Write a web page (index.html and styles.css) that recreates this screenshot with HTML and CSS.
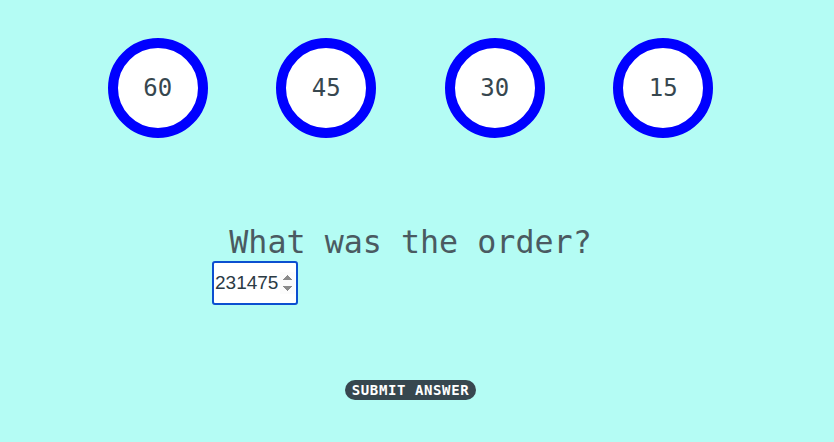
FILE: index.html
```html
<!DOCTYPE html>
<html>
<head>
<meta charset="utf-8">
<link rel="stylesheet" href="styles.css">
</head>
<body>
<main class="page">
  <div class="circles">
    <div class="circle">60</div>
    <div class="circle">45</div>
    <div class="circle">30</div>
    <div class="circle">15</div>
  </div>
  <section class="question">
    <h2 class="prompt">What was the order?</h2>
    <div class="answer">
      <input class="order-input" type="number" value="231475" autofocus>
    </div>
  </section>
  <div class="actions">
    <button class="submit">SUBMIT ANSWER</button>
  </div>
</main>
</body>
</html>
```
FILE: styles.css
```css
html, body {
  margin: 0;
  padding: 0;
  background: #b4fcf4;
}
.page {
  width: 821px;
  font-family: "DejaVu Sans Mono", monospace;
  color: #37474f;
}
.circles {
  display: flex;
  justify-content: center;
  gap: 68.5px;
  padding-top: 38px;
}
.circle {
  width: 100px;
  height: 100px;
  box-sizing: border-box;
  border: 10px solid #0000ff;
  border-radius: 50%;
  background: #ffffff;
  display: flex;
  align-items: center;
  justify-content: center;
  font-size: 24px;
  font-family: "DejaVu Sans Mono", monospace;
  color: #37474f;
}
.question {
  width: 397px;
  margin: 84px auto 0;
}
.prompt {
  margin: 0;
  font-weight: normal;
  font-size: 31.7px;
  line-height: 40px;
  text-align: center;
  color: #4a5a61;
}
.answer {
  margin-top: -1px;
}
.order-input {
  display: block;
  width: 86px;
  height: 44px;
  box-sizing: border-box;
  border: 2px solid #0b4fd0;
  border-radius: 3px;
  outline: none;
  padding: 0 1px 0 1px;
  font-family: "Liberation Sans", Arial, sans-serif;
  font-size: 19px;
  color: #2b3a44;
  background: #fff;
}
.actions {
  display: flex;
  justify-content: center;
  margin-top: 75px;
}
.submit {
  height: 20px;
  width: 131px;
  padding: 0;
  border: none;
  border-radius: 10px;
  background: #37474f;
  color: #fff;
  font-family: "DejaVu Sans Mono", monospace;
  font-weight: bold;
  font-size: 14px;
  letter-spacing: 0.6px;
  line-height: 20px;
}
```
